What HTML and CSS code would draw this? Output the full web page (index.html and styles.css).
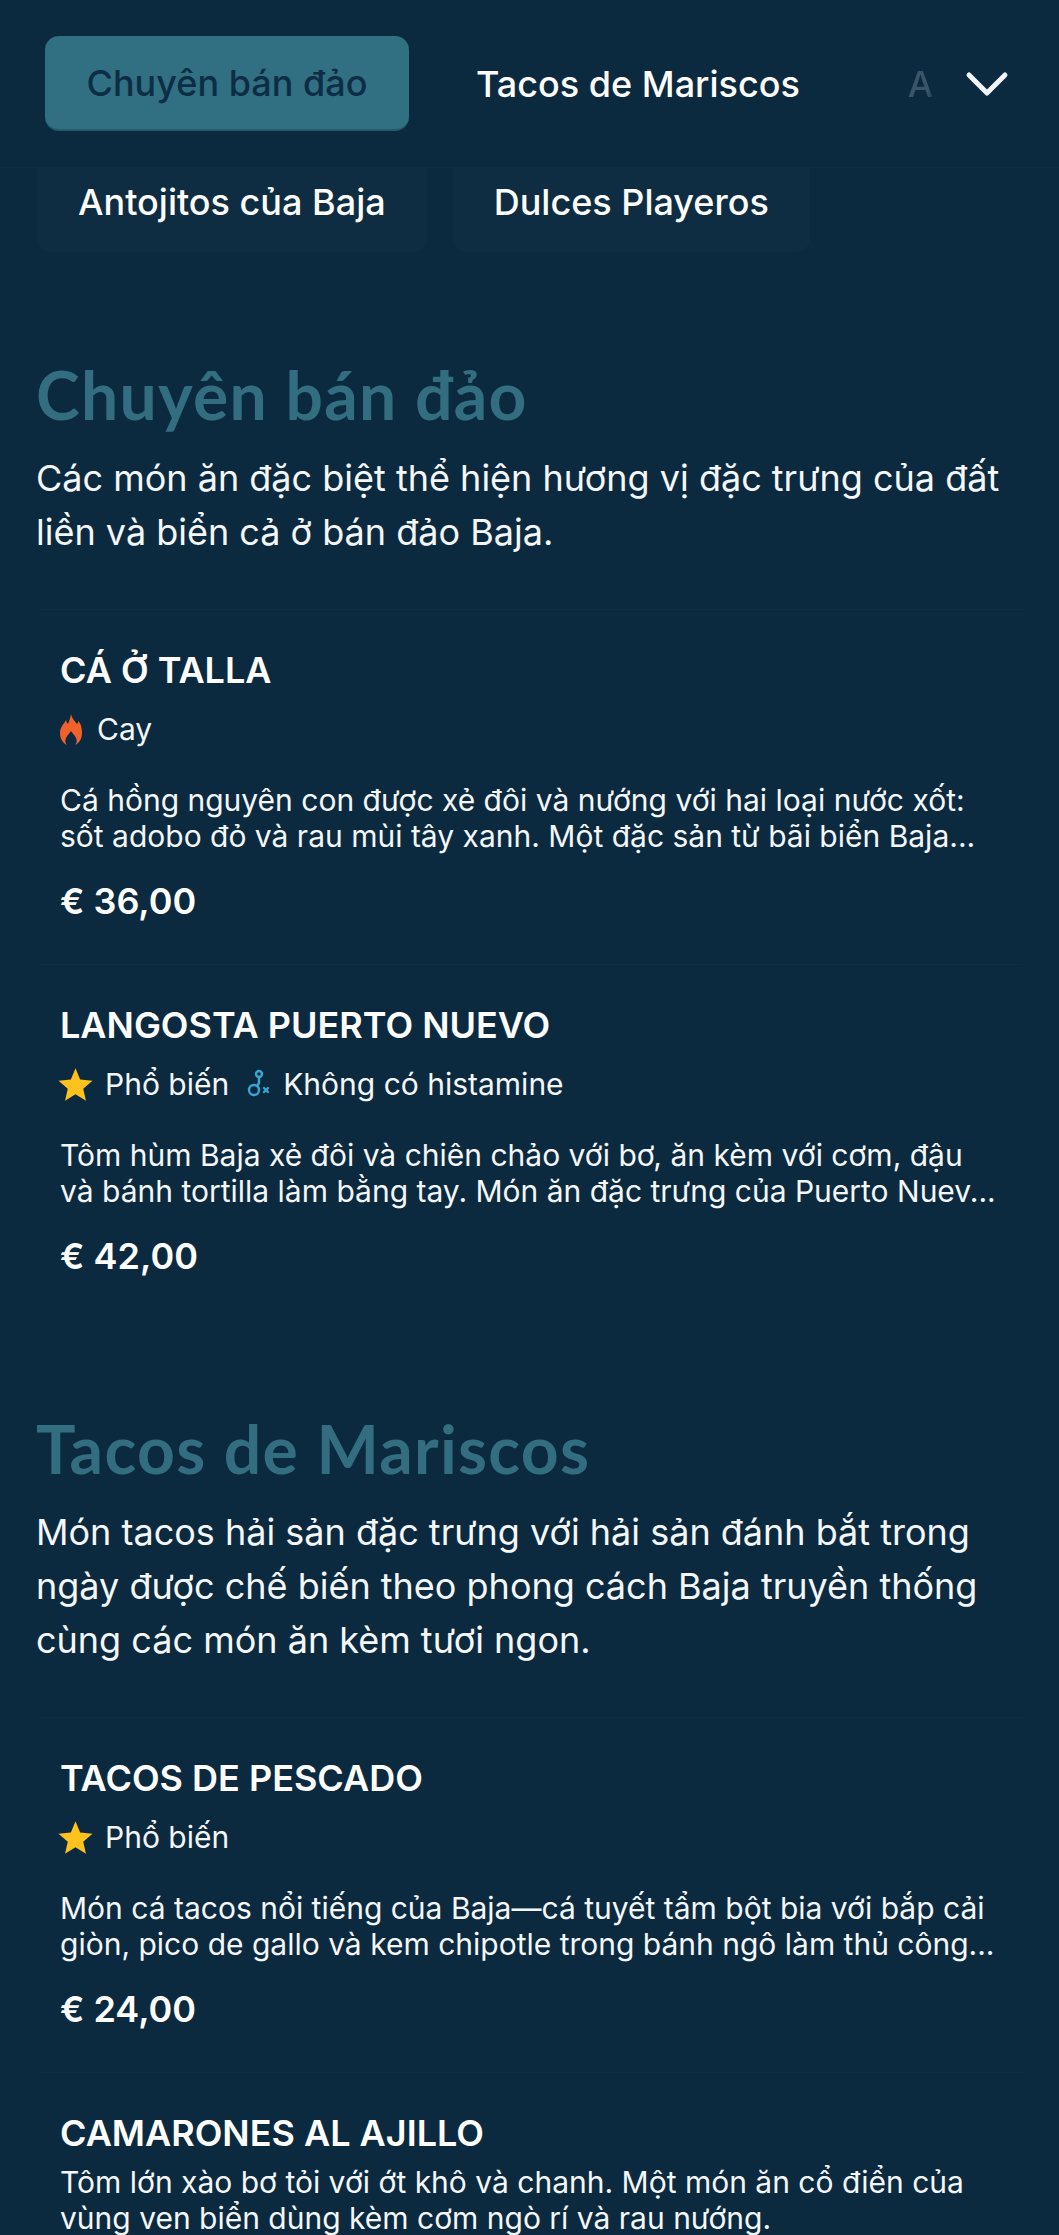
FILE: index.html
```html
<!DOCTYPE html>
<html lang="vi">
<head>
  <meta charset="UTF-8" />
  <meta name="viewport" content="width=device-width, initial-scale=1.0" />
  <title>Thực đơn</title>
  <link rel="stylesheet" href="styles.css">
</head>
<body>
  <nav class="topbar">
    <a class="tab active">Chuyên bán đảo</a>
    <a class="tab">Tacos de Mariscos</a>
    <a class="tab-fade">An</a>
    <svg class="chevron" viewBox="0 0 44 28" width="44" height="28">
      <path d="M4 5 L22 23 L40 5" fill="none" stroke="#f4f7f9" stroke-width="5" stroke-linecap="round" stroke-linejoin="round" />
    </svg>
  </nav>
  <div class="chips">
    <a class="chip">Antojitos của Baja</a>
    <a class="chip">Dulces Playeros</a>
  </div>

  <section class="section">
    <h2>Chuyên bán đảo</h2>
    <p class="intro">Các món ăn đặc biệt thể hiện hương vị đặc trưng của đất liền và biển cả ở bán đảo Baja.</p>

    <article class="item">
      <h3>CÁ Ở TALLA</h3>
      <div class="tags">
        <span class="tag">
          <svg class="ico-flame" viewBox="0 0 22 31" width="22" height="31"><path fill="#f0622a" fill-rule="evenodd" d="M11 0c1 5 4 7 6 10 1-1 1.500-2 1.500-3C21 10 22 14 22 19c0 6-3 10-7 12 1.500-1.500 2-3.500 1.500-5.500C16 22.500 13.500 20.500 11 17c-2.500 3.500-5 5.500-5.500 8.500C5 27.500 5.500 29.500 7 31c-4-2-7-6-7-12C0 13 4 10 6 6c.5 2 1 3 2 4 1-3 2.500-6 3-10z"/></svg>
          Cay
        </span>
      </div>
      <p class="desc">Cá hồng nguyên con được xẻ đôi và nướng với hai loại nước xốt: sốt adobo đỏ và rau mùi tây xanh. Một đặc sản từ bãi biển Baja...</p>
      <div class="price">€ 36,00</div>
    </article>

    <article class="item">
      <h3>LANGOSTA PUERTO NUEVO</h3>
      <div class="tags">
        <span class="tag">
          <svg class="ico-star" viewBox="0 0 24 24" width="37" height="37"><path fill="#fdc21e" d="M12 1.500l3 7.300 8 .7-6 5.200 1.800 7.800L12 18.400l-6.800 4.100L7 14.700l-6-5.200 8-.7z"/></svg>
          Phổ biến
        </span>
        <span class="tag">
          <svg class="ico-hist" viewBox="0 0 24 30" width="24" height="30"><g fill="none" stroke="#3aa6d0" stroke-width="2.400" stroke-linecap="round"><circle cx="7" cy="21" r="5"/><circle cx="12" cy="5" r="3"/><path d="M12 8v6l-2 3M17 19l4 4M21 19l-4 4"/></g></svg>
          Không có histamine
        </span>
      </div>
      <p class="desc">Tôm hùm Baja xẻ đôi và chiên chảo với bơ, ăn kèm với cơm, đậu và bánh tortilla làm bằng tay. Món ăn đặc trưng của Puerto Nuev...</p>
      <div class="price">€ 42,00</div>
    </article>
  </section>

  <section class="section">
    <h2>Tacos de Mariscos</h2>
    <p class="intro">Món tacos hải sản đặc trưng với hải sản đánh bắt trong ngày được chế biến theo phong cách Baja truyền thống cùng các món ăn kèm tươi ngon.</p>

    <article class="item">
      <h3>TACOS DE PESCADO</h3>
      <div class="tags">
        <span class="tag">
          <svg class="ico-star" viewBox="0 0 24 24" width="37" height="37"><path fill="#fdc21e" d="M12 1.500l3 7.300 8 .7-6 5.200 1.800 7.800L12 18.400l-6.800 4.100L7 14.700l-6-5.200 8-.7z"/></svg>
          Phổ biến
        </span>
      </div>
      <p class="desc">Món cá tacos nổi tiếng của Baja—cá tuyết tẩm bột bia với bắp cải giòn, pico de gallo và kem chipotle trong bánh ngô làm thủ công...</p>
      <div class="price">€ 24,00</div>
    </article>

    <article class="item">
      <h3>CAMARONES AL AJILLO</h3>
      <p class="desc tight">Tôm lớn xào bơ tỏi với ớt khô và chanh. Một món ăn cổ điển của vùng ven biển dùng kèm cơm ngò rí và rau nướng.</p>
    </article>
  </section>
</body>
</html>
```

FILE: styles.css
```css
html, body {
  height: 2235px;
  overflow: hidden;
}
body {
  margin: 0;
  background: #0c2a3f;
  color: #fff;
  font-family: Inter, "Noto Sans", sans-serif;
}
a { display: block; }

.topbar {
  display: flex;
  align-items: center;
  height: 168px;
  padding: 0 45px;
  box-sizing: border-box;
  border-bottom: 1px solid #0f2f46;
}
.tab {
  width: 364px;
  height: 95px;
  box-sizing: border-box;
  display: flex;
  align-items: center;
  justify-content: center;
  font-size: 36px;
  font-weight: 500;
  white-space: nowrap;
  flex: none;
}
.tab.active {
  background: #316f82;
  color: #0d2d44;
  border-radius: 14px;
  border-bottom: 2px solid #255a6c;
}
.tab + .tab {
  width: auto;
  margin-left: 67px;
}
.tab-fade {
  margin-left: 108px;
  font-size: 36px;
  font-weight: 500;
  color: #3b5568;
  flex: none;
  -webkit-mask-image: linear-gradient(to right, #000 42%, transparent 60%);
  mask-image: linear-gradient(to right, #000 42%, transparent 60%);
}
.chevron {
  margin-left: auto;
  margin-right: 5px;
  flex: none;
}

.chips {
  display: flex;
  gap: 26px;
  padding: 0 37px;
}
.chip {
  padding: 12px 41px 0;
  height: 84px;
  box-sizing: border-box;
  background: #0e2d43;
  border-radius: 0 0 14px 14px;
  font-size: 36px;
  line-height: 44px;
  font-weight: 500;
  white-space: nowrap;
}

.section {
  padding: 0 36px;
}
.section + .section {
  margin-top: 88px;
}
.section h2 {
  margin: 101px 0 14px;
  font-family: Lato, sans-serif;
  font-size: 66px;
  line-height: 84px;
  letter-spacing: 1.3px;
  font-weight: 700;
  color: #336d80;
}
.section + .section h2 {
  margin-top: 0;
}
.intro {
  margin: 0 0 50px;
  font-size: 36px;
  line-height: 54px;
  color: #f4f7f9;
}
.item {
  margin: 0 0 0 3px;
  padding: 0 24px 41px 21px;
  border-top: 1px solid #102f45;
}
.item h3 {
  margin: 39px 0 0;
  font-size: 36px;
  line-height: 42px;
  font-weight: 600;
}
.tags {
  display: flex;
  gap: 18px;
  margin-top: 16px;
  height: 44px;
  align-items: center;
}
.tag {
  display: flex;
  align-items: center;
  gap: 11px;
  font-size: 30px;
  color: #f4f7f9;
}
.ico-flame {
  margin-right: 4px;
}
.ico-star {
  margin-left: -3px;
}
.ico-hist {
  margin: 0 1px 0 0;
}
.desc {
  margin: 31px 0 0;
  font-size: 30px;
  line-height: 36px;
  color: #f4f7f9;
}
.desc.tight {
  margin-top: 10px;
}
.price {
  margin-top: 25px;
  font-size: 36px;
  line-height: 44px;
  font-weight: 600;
}
```
